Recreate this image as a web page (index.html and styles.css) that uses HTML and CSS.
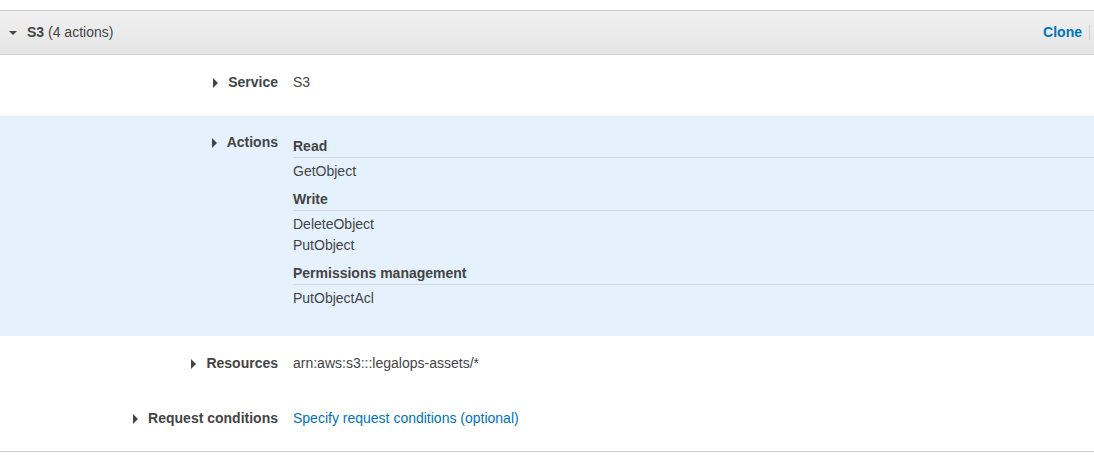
FILE: index.html
```html
<!DOCTYPE html>
<html lang="en">
<head>
    <meta charset="UTF-8">
    <title>Policy summary - S3</title>
    <link rel="stylesheet" href="styles.css">
</head>
<body>
    <div class="policy">
        <div class="policy-head">
            <div class="head-title">
                <span class="caret-down"></span>
                <b>S3</b>&nbsp;(4 actions)
            </div>
            <div class="head-links">
                <a href="#" class="link-bold">Clone</a>
                <span class="sep"></span>
            </div>
        </div>

        <div class="row row-service">
            <div class="label"><span class="caret-right"></span>Service</div>
            <div class="value">S3</div>
        </div>

        <div class="row row-actions">
            <div class="label"><span class="caret-right"></span>Actions</div>
            <div class="value">
                <div class="group">
                    <div class="group-title">Read</div>
                    <div class="item">GetObject</div>
                </div>
                <div class="group">
                    <div class="group-title">Write</div>
                    <div class="item">DeleteObject</div>
                    <div class="item">PutObject</div>
                </div>
                <div class="group">
                    <div class="group-title">Permissions management</div>
                    <div class="item">PutObjectAcl</div>
                </div>
            </div>
        </div>

        <div class="row row-resources">
            <div class="label"><span class="caret-right"></span>Resources</div>
            <div class="value">arn:aws:s3:::legalops-assets/*</div>
        </div>

        <div class="row row-conditions">
            <div class="label"><span class="caret-right"></span>Request conditions</div>
            <div class="value"><a href="#" class="link">Specify request conditions (optional)</a></div>
        </div>
    </div>
</body>
</html>
```

FILE: styles.css
```css
* {
    margin: 0;
    padding: 0;
    box-sizing: border-box;
}

body {
    font-family: 'Liberation Sans', Arial, sans-serif;
    font-size: 14px;
    line-height: 21px;
    color: #444;
    background: #fff;
    padding-top: 10px;
}

.policy {
    border-bottom: 1px solid #ccc;
}

.policy-head {
    display: flex;
    align-items: center;
    justify-content: space-between;
    height: 45px;
    padding: 0 4px 0 9px;
    border-top: 1px solid #ccc;
    border-bottom: 1px solid #ccc;
    background: linear-gradient(#f1f1f1, #e4e4e4);
}

.head-title {
    display: flex;
    align-items: center;
}

.head-title b {
    color: #444;
}

.caret-down {
    width: 0;
    height: 0;
    border-left: 4px solid transparent;
    border-right: 4px solid transparent;
    border-top: 4px solid #444;
    margin-right: 10px;
}

.head-links {
    display: flex;
    align-items: center;
}

.link-bold {
    color: #0073bb;
    font-weight: bold;
    text-decoration: none;
}

.sep {
    width: 1px;
    height: 15px;
    background: #ccc;
    margin-left: 7px;
}

.row {
    display: flex;
}

.label {
    width: 278px;
    display: flex;
    justify-content: flex-end;
    align-items: center;
    align-self: flex-start;
    font-weight: bold;
}

.caret-right {
    width: 0;
    height: 0;
    border-top: 5px solid transparent;
    border-bottom: 5px solid transparent;
    border-left: 5px solid #444;
    margin-right: 10px;
}

.value {
    flex: 1;
    margin-left: 15px;
}

.row-service {
    padding: 17px 0 23px;
}

.row-actions {
    background: #e5f1fd;
    padding: 16px 0 27px;
}

.row-resources {
    padding: 17px 0 17px;
}

.row-conditions {
    padding: 17px 0 22px;
}

.group + .group {
    margin-top: 3px;
}

.group-title {
    font-weight: bold;
    padding-top: 4px;
    border-bottom: 1px solid #d5dbe2;
    margin-bottom: 3px;
}

.link {
    color: #0073bb;
    text-decoration: none;
}
```
